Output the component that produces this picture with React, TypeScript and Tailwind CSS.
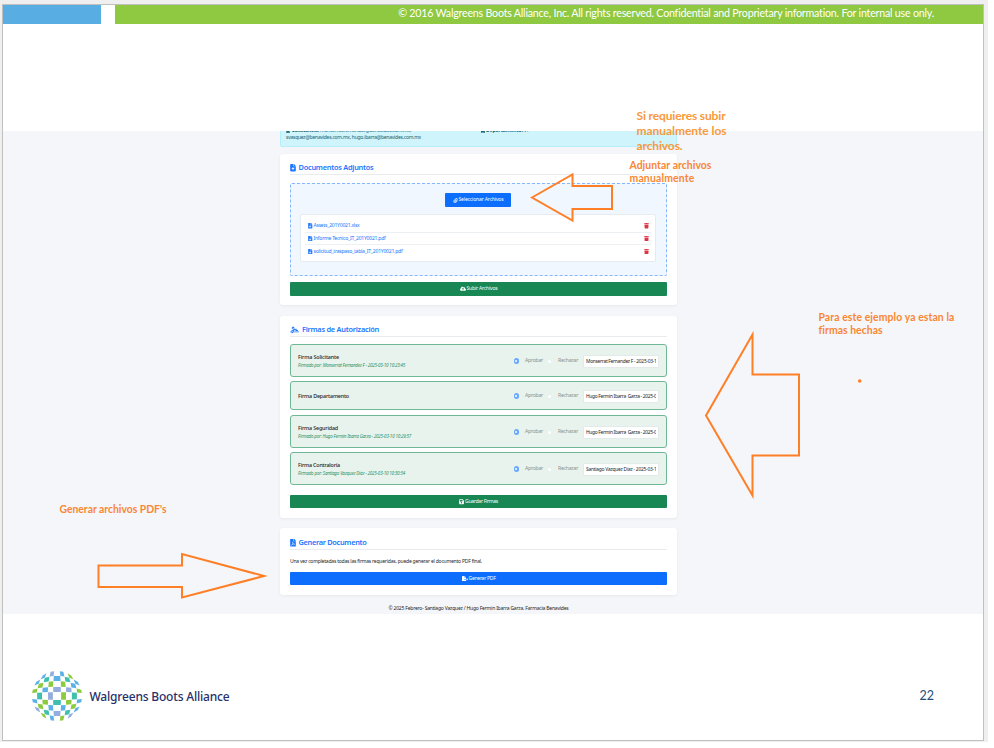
import { useLayoutEffect, useRef, useState } from "react";
import type { ReactNode } from "react";
import { FaFileAlt, FaFilePdf } from "react-icons/fa";
import {
  FaCloudArrowUp,
  FaFileArrowUp,
  FaFileExport,
  FaFloppyDisk,
  FaPaperclip,
  FaSignature,
  FaTrash,
  FaBuilding,
  FaUser,
} from "react-icons/fa6";

/* A single line of text whose tracking is adjusted so it spans `w` pixels. */
function Line({ w, className = "", children }: { w: number; className?: string; children: string }) {
  const ref = useRef<HTMLSpanElement>(null);
  const [gap, setGap] = useState(0);
  useLayoutEffect(() => {
    const el = ref.current;
    if (el) setGap((w - el.getBoundingClientRect().width) / children.length);
  }, [w, children]);
  return (
    <span ref={ref} style={{ letterSpacing: `${gap}px` }} className={`inline-block shrink-0 whitespace-pre ${className}`}>
      {children}
    </span>
  );
}

const palette: Record<string, string> = { b: "#5bb1e6", g: "#8cca3e", t: "#3fc0ae", p: "#93aede" };
const globeRows = ["b.p.b.g", "b.t.b.t.b", "g.g.g.b", "g.b.p.p.g", "t.p.g.t", "b.g.t.g.b", "g.b.b.g", "p.t.p.t.b", "g.b.g.p"];
const edges: [number, number][] = [[-0.155, 0.155], [0.165, 0.36], [0.37, 0.59], [0.6, 0.8], [0.81, 1]];

function span(i: number): [number, number] {
  const [a, b] = edges[Math.abs(i)];
  return i < 0 ? [-b, -a] : [a, b];
}

function Globe() {
  const R = 25;
  const pt = (a: number, b: number) =>
    `${(R * a * Math.sqrt(1 - (b * b) / 2)).toFixed(2)},${(R * b * Math.sqrt(1 - (a * a) / 2)).toFixed(2)}`;
  const cells: ReactNode[] = [];
  globeRows.forEach((row, r) => {
    const cols = row.split(".");
    const start = cols.length === 4 ? -3 : -4;
    const [b0, b1] = span(r - 4);
    cols.forEach((c, k) => {
      const [a0, a1] = span(start + k * 2);
      cells.push(
        <polygon key={`${r}-${k}`} fill={palette[c]} points={[pt(a0, b0), pt(a1, b0), pt(a1, b1), pt(a0, b1)].join(" ")} />,
      );
    });
  });
  return (
    <svg className="h-[50px] w-[50px] shrink-0" viewBox="-25 -25 50 50">
      {cells}
    </svg>
  );
}

function Heading({ icon, w, children }: { icon: ReactNode; w: number; children: string }) {
  return (
    <div className="flex h-[14px] items-center border-b border-[#e9ecef] pt-[1px] text-[7.4px] leading-none font-semibold text-[#1a75ff]">
      {icon}
      <Line w={w}>{children}</Line>
    </div>
  );
}

function WideButton({ icon, w, className, children }: { icon: ReactNode; w: number; className: string; children: string }) {
  return (
    <button className={`flex w-full items-center justify-center gap-[1px] rounded-[1px] text-[5.1px] leading-none text-white ${className}`}>
      {icon}
      <Line w={w}>{children}</Line>
    </button>
  );
}

const files = [
  { name: "Assets_201Y0021.xlsx", w: 46 },
  { name: "Informe Tecnico_IT_201Y0021.pdf", w: 72 },
  { name: "solicitud_traspaso_tabla_IT_201Y0021.pdf", w: 89 },
];

const firmas = [
  { title: "Firma Solicitante", w: 41, by: "Firmado por: Monserrat Fernandez F - 2025-03-10 10:23:45", bw: 107, value: "Monserrat Fernandez F - 2025-03-10", size: "h-[33px] mb-[4px]" },
  { title: "Firma Departamento", w: 51, by: "", bw: 0, value: "Hugo Fermin Ibarra  Garza - 2025-03", size: "h-[29px] mb-[5px]" },
  { title: "Firma Seguridad", w: 40, by: "Firmado por: Hugo Fermin Ibarra Garza - 2025-03-10 10:29:57", bw: 113, value: "Hugo Fermin Ibarra  Garza - 2025-03", size: "h-[33px] mb-[4px]" },
  { title: "Firma Contraloría", w: 42, by: "Firmado por: Santiago Vazquez Diaz - 2025-03-10 10:30:54", bw: 107, value: "Santiago Vazquez Diaz - 2025-03-10", size: "h-[33px]" },
];

const card = "rounded-[3px] bg-white px-[10px] shadow-[0_1px_3px_rgba(0,0,0,0.06)]";

export default function App() {
  return (
    <div className="relative h-[748px] w-[994px] overflow-hidden bg-white font-['Noto_Sans',sans-serif]">
      <div className="h-[742px] w-[988px] bg-[#efefef] pt-[4px] pl-[2px]">
        <div className="flex h-[737px] w-[982px] flex-col border border-[#c0c0c0] bg-white">
          <header className="flex h-[19px] shrink-0">
            <div className="w-[98px] bg-[#58aee3]" />
            <div className="ml-[14px] flex flex-1 justify-end bg-[#8fc841] pr-[49px] font-['Lato','Open_Sans',sans-serif] text-[10.7px] leading-[16px] text-white">
              <Line w={536}>
                © 2016 Walgreens Boots Alliance, Inc. All rights reserved. Confidential and Proprietary information. For internal use only.
              </Line>
            </div>
          </header>

          <main className="mt-[107px] h-[483px] shrink-0 overflow-hidden bg-[#f4f6fa]">
            <div className="ml-[277px] flex w-[397px] flex-col">
              <div className="h-[16px] overflow-hidden rounded-b-[2px] border border-t-0 border-[#b6effb] bg-[#cff4fc] px-[5px] text-[5px] leading-[7px] text-[#17616d]">
                <div className="-mt-[4px] flex h-[7px] items-center">
                  <FaUser className="mr-[2px] h-[5px] w-[4px]" />
                  <Line w={27} className="font-bold">Solicitantes:</Line>
                  <Line w={92}> monserrat.fernandez@benavides.com.mx,</Line>
                  <FaBuilding className="mr-[1px] ml-[70px] h-[5px] w-[4px]" />
                  <Line w={37} className="font-bold">Departamento:</Line>
                  <Line w={6}> IT</Line>
                </div>
                <div className="flex">
                  <Line w={135}>svasquez@benavides.com.mx, hugo.ibarra@benavides.com.mx</Line>
                </div>
              </div>

              <section className={`mt-[7px] h-[151px] pt-[7px] ${card}`}>
                <Heading w={75} icon={<FaFileArrowUp className="mr-[2.5px] h-[7.5px] w-[6px]" />}>Documentos Adjuntos</Heading>
                <div className="mt-[8px] flex h-[93px] flex-col items-center rounded-[2px] border border-dashed border-[#86b7fe] bg-[#f1f7ff] pt-[9px]">
                  <button className="mr-[1px] flex h-[14px] w-[66px] items-center justify-center gap-[1px] rounded-[1px] bg-[#0d6efd] text-[5.1px] leading-none text-white">
                    <FaPaperclip className="h-[5px] w-[5px]" />
                    <Line w={45}>Seleccionar Archivos</Line>
                  </button>
                  <div className="mt-[7px] mr-[1px] h-[48px] w-[356px] rounded-[2px] border border-[#e6ebf1] bg-white px-[4px] pt-[5px]">
                    {files.map((f) => (
                      <div key={f.name} className="flex h-[12.7px] items-center border-b border-[#edf0f3] px-[3px] text-[5.1px] leading-none text-[#1a75ff] last:border-0">
                        <FaFileAlt className="mr-[1px] h-[5.5px] w-[4.5px]" />
                        <Line w={f.w}>{f.name}</Line>
                        <FaTrash className="-mr-[1px] ml-auto h-[5.5px] w-[5px] text-[#dc3545]" />
                      </div>
                    ))}
                  </div>
                </div>
                <WideButton w={31} className="mt-[6px] h-[14px] bg-[#198754]" icon={<FaCloudArrowUp className="h-[5.5px] w-[6px]" />}>Subir Archivos</WideButton>
              </section>

              <section className={`mt-[11px] h-[202px] pt-[7px] ${card}`}>
                <Heading w={77} icon={<FaSignature className="mr-[3px] h-[8px] w-[9px]" />}>Firmas de Autorización</Heading>
                <div className="mt-[7px] mb-[10px]">
                  {firmas.map((f) => (
                    <div key={f.title} className={`flex items-center rounded-[3px] border border-[#6fb896] bg-[#e8f3ed] pt-[1px] pr-[7px] pl-[7px] ${f.size}`}>
                      <div className="flex flex-1 flex-col items-start">
                        <Line w={f.w} className="text-[5.4px] leading-[8px] font-medium text-[#212529]">{f.title}</Line>
                        {f.by && <Line w={f.bw} className="text-[4.5px] leading-[9px] text-[#2f9265] italic">{f.by}</Line>}
                      </div>
                      <div className="flex items-center text-[5.2px] leading-none text-[#8a928e]">
                        <span className="h-[5.5px] w-[5.5px] rounded-full bg-[#6aa8fb] p-[1.75px]">
                          <span className="block h-[2px] w-[2px] rounded-full bg-white" />
                        </span>
                        <Line w={18} className="ml-[6px]">Aprobar</Line>
                        <span className="ml-[5px] h-[3px] w-[3px] rounded-full bg-white" />
                        <Line w={20} className="ml-[7px]">Rechazar</Line>
                        <div className="ml-[5px] h-[13px] w-[76px] rounded-[1px] border border-[#e3eaea] bg-white px-[2px]">
                          <div className="flex h-full overflow-hidden text-[4.9px] leading-[11px] text-[#212529]">
                            <Line w={73}>{f.value}</Line>
                          </div>
                        </div>
                      </div>
                    </div>
                  ))}
                </div>
                <WideButton w={33} className="h-[13px] bg-[#198754] pt-[1px]" icon={<FaFloppyDisk className="h-[5.5px] w-[5px]" />}>Guardar Firmas</WideButton>
              </section>

              <section className={`mt-[10px] h-[67px] pt-[8px] ${card}`}>
                <Heading w={68} icon={<FaFilePdf className="mr-[2.5px] h-[7.5px] w-[6px]" />}>Generar Documento</Heading>
                <div className="mt-[7px] flex text-[5px] leading-[8px] text-[#212529]">
                  <Line w={192}>Una vez completadas todas las firmas requeridas, puede generar el documento PDF final.</Line>
                </div>
                <WideButton w={27} className="mt-[7px] h-[13px] bg-[#0d6efd]" icon={<FaFileExport className="h-[5.5px] w-[6px]" />}>Generar PDF</WideButton>
              </section>

              <div className="mt-[9px] flex justify-center text-[5px] leading-[8px] text-[#212529]">
                <Line w={180}>© 2025 Febrero- Santiago Vazquez / Hugo Fermin Ibarra Garza. Farmacia Benavides</Line>
              </div>
            </div>
          </main>

          <footer className="flex flex-1 items-center pt-[38px] pr-[49px] pl-[29px]">
            <Globe />
            <Line w={140} className="mt-[1px] ml-[7.5px] text-[12px] font-medium text-[#27306b]">Walgreens Boots Alliance</Line>
            <span className="ml-auto font-['Lato','Open_Sans',sans-serif] text-[12.5px] text-[#1f4e79]">22</span>
          </footer>
        </div>
      </div>

      {/* Slide annotations drawn over the screenshot */}
      <div className="absolute top-[108px] left-[636.5px] flex flex-col items-start font-['Lato',sans-serif] text-[12px] leading-[15px] font-bold text-[#f79a3c]">
        <Line w={89}>Si requieres subir</Line>
        <Line w={90}>manualmente los</Line>
        <Line w={46}>archivos.</Line>
      </div>
      <div className="absolute top-[159px] left-[629.5px] flex flex-col items-start font-['Lato',sans-serif] text-[10.4px] leading-[13px] font-bold text-[#fa8634]">
        <Line w={82}>Adjuntar archivos</Line>
        <Line w={65}>manualmente</Line>
      </div>
      <div className="absolute top-[311px] left-[818.5px] flex flex-col items-start font-['Lato',sans-serif] text-[10.4px] leading-[13px] font-bold text-[#fa8634]">
        <Line w={136}>Para este ejemplo ya estan la</Line>
        <Line w={64}>firmas hechas</Line>
      </div>
      <div className="absolute top-[503px] left-[59.5px] flex font-['Lato',sans-serif] text-[10.4px] leading-[13px] font-bold text-[#fa8634]">
        <Line w={107}>Generar archivos PDF's</Line>
      </div>
      <svg className="pointer-events-none absolute inset-0" width="994" height="748" fill="none" stroke="#ff7f27" strokeWidth="2">
        <path d="M532 197.5 L572.5 174.5 V186 H612 V209 H572.5 V220.5 Z" />
        <path d="M706 415.5 L752.5 334.5 V374.5 H799 V455.5 H752.5 V495.5 Z" />
        <path d="M264 576 L182 554 V565.5 H98.5 V587 H182 V597.5 Z" />
        <circle cx="859.7" cy="381" r="1.8" fill="#ff7f27" stroke="none" />
      </svg>
    </div>
  );
}
